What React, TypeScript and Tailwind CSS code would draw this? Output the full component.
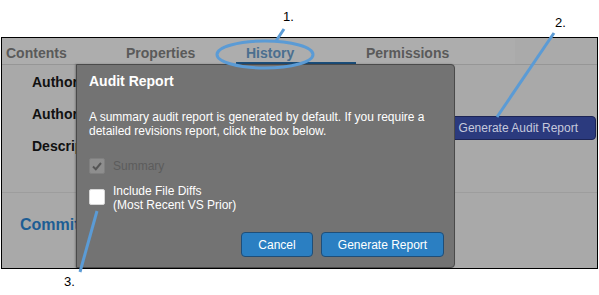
import React from "react";

export default function App() {
  return (
    <div className="relative w-[599px] h-[295px] bg-white overflow-hidden font-['Liberation_Sans',Arial,sans-serif]">
      <div className="pt-[37px] pl-[1px]">
        <div className="w-[597px] h-[232px] border border-black bg-[#a9a9a9] flex flex-col">
          {/* Tab bar */}
          <div className="h-[27px] shrink-0 border-b border-[#969696] flex bg-[#aaaaaa]">
            <div className="flex w-[513px] bg-[#adadad] text-[14px] font-bold leading-[16px] text-[#5a5a5a]">
              <div className="w-[114px] pl-[4px] pt-[7px]">Contents</div>
              <div className="w-[120px] pl-[10px] pt-[7px]">Properties</div>
              <div className="w-[120px] pl-[10px] pt-[7px] text-[#4b6f8f] border-b-[2px] border-[#1b4e7b]">History</div>
              <div className="w-[120px] pl-[10px] pt-[7px]">Permissions</div>
            </div>
          </div>

          {/* Content */}
          <div className="relative flex-1 flex flex-col">
            <div className="flex justify-between h-[128px] border-b border-[#9d9d9d]">
              <div className="flex flex-col gap-[16px] pl-[30px] pt-[9px] text-[14px] font-bold leading-[16px] text-[#111]">
                <div>Author</div>
                <div>Author</div>
                <div>Description</div>
              </div>
              <div className="pt-[50px] pr-[1px]">
                <button className="h-[24px] px-[17px] rounded-[4px] bg-[#2b3a7e] border border-[#1c2455] text-[12px] leading-[14px] text-[#c6c9dc]">
                  Generate Audit Report
                </button>
              </div>
            </div>
            <div className="pl-[18px] pt-[23px] text-[16px] font-bold leading-[18px] text-[#1d5d94]">Committed</div>

            {/* Dialog overlay */}
            <div className="absolute left-[74px] top-[-1px] bottom-0 w-[379px] bg-[#737373] border border-[#4a4a4a] rounded-tr-[4px] rounded-br-[4px] shadow-[-1px_0_2px_rgba(0,0,0,0.25)] flex flex-col pl-[12px] pr-[10px] pt-[8px] pb-[10px]">
              <div className="text-[14px] font-bold leading-[16px] text-white">Audit Report</div>
              <div className="mt-[21px] text-[12px] leading-[14px] text-white">
                A summary audit report is generated by default. If you require a
                <br />
                detailed revisions report, click the box below.
              </div>
              <div className="mt-[20px] flex items-center gap-[8px]">
                <div className="w-[16px] h-[16px] rounded-[2px] bg-[#8e8e8e] border border-[#808080] flex items-center justify-center">
                  <svg width="12" height="12" viewBox="0 0 12 12">
                    <path d="M2 6.5 L4.8 9.2 L10 3" fill="none" stroke="#555" strokeWidth="2" />
                  </svg>
                </div>
                <div className="text-[12px] leading-[14px] text-[#5c5c5c]">Summary</div>
              </div>
              <div className="mt-[10px] flex items-start gap-[8px]">
                <div className="mt-[5px] w-[16px] h-[16px] rounded-[2px] bg-white border border-[#d8d8d8]" />
                <div className="text-[12px] leading-[14px] text-white">
                  Include File Diffs
                  <br />
                  (Most Recent VS Prior)
                </div>
              </div>
              <div className="mt-auto flex justify-end gap-[8px]">
                <button className="h-[25px] w-[72px] rounded-[4px] bg-[#2b7fc2] border border-[#1f4e78] text-[12px] leading-[14px] text-white">
                  Cancel
                </button>
                <button className="h-[25px] w-[123px] rounded-[4px] bg-[#2b7fc2] border border-[#1f4e78] text-[12px] leading-[14px] text-white">
                  Generate Report
                </button>
              </div>
            </div>
          </div>
        </div>
      </div>

      {/* Annotations */}
      <svg className="absolute inset-0 pointer-events-none" width="599" height="295" viewBox="0 0 599 295">
        <line x1="284" y1="29" x2="276" y2="41" stroke="#5b9bd5" strokeWidth="3" />
        <ellipse cx="265" cy="54.5" rx="48" ry="13.5" fill="none" stroke="#5b9bd5" strokeWidth="3" />
        <line x1="554" y1="33" x2="497" y2="117" stroke="#5b9bd5" strokeWidth="3" />
        <line x1="97" y1="211" x2="80" y2="272" stroke="#5b9bd5" strokeWidth="3" />
      </svg>
      <span className="absolute left-[283px] top-[9px] text-[13px] leading-[15px] text-black">1.</span>
      <span className="absolute left-[555px] top-[15px] text-[13px] leading-[15px] text-black">2.</span>
      <span className="absolute left-[64px] top-[274px] text-[13px] leading-[15px] text-black">3.</span>
    </div>
  );
}
